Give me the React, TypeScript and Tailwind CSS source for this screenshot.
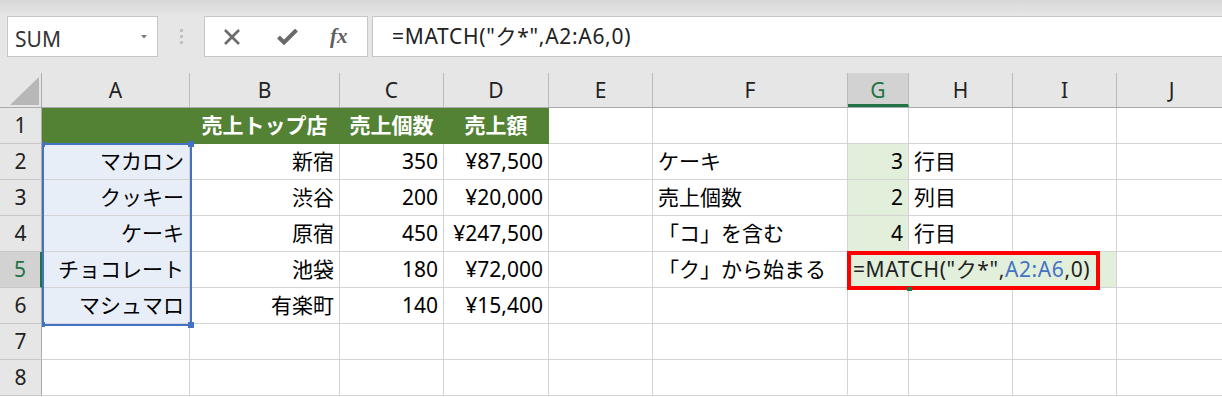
import React from 'react';

const cols = [
  { key: 'A', w: 'w-[148px]' },
  { key: 'B', w: 'w-[150px]' },
  { key: 'C', w: 'w-[104px]' },
  { key: 'D', w: 'w-[105px]' },
  { key: 'E', w: 'w-[104px]' },
  { key: 'F', w: 'w-[195px]' },
  { key: 'G', w: 'w-[61px]' },
  { key: 'H', w: 'w-[104px]' },
  { key: 'I', w: 'w-[104px]' },
  { key: 'J', w: 'w-[110px]' },
];

type Cell = { text?: string; align?: 'l' | 'r' | 'c'; bg?: string; head?: boolean };

const rows: Cell[][] = [
  [
    { head: true },
    { text: '売上トップ店', align: 'c', head: true },
    { text: '売上個数', align: 'c', head: true },
    { text: '売上額', align: 'c', head: true },
    {}, {}, {}, {}, {}, {},
  ],
  [
    { text: 'マカロン', align: 'r', bg: 'sel' },
    { text: '新宿', align: 'r' },
    { text: '350', align: 'r' },
    { text: '¥87,500', align: 'r' },
    {},
    { text: 'ケーキ', align: 'l' },
    { text: '3', align: 'r', bg: 'green' },
    { text: '行目', align: 'l' },
    {}, {},
  ],
  [
    { text: 'クッキー', align: 'r', bg: 'sel' },
    { text: '渋谷', align: 'r' },
    { text: '200', align: 'r' },
    { text: '¥20,000', align: 'r' },
    {},
    { text: '売上個数', align: 'l' },
    { text: '2', align: 'r', bg: 'green' },
    { text: '列目', align: 'l' },
    {}, {},
  ],
  [
    { text: 'ケーキ', align: 'r', bg: 'sel' },
    { text: '原宿', align: 'r' },
    { text: '450', align: 'r' },
    { text: '¥247,500', align: 'r' },
    {},
    { text: '「コ」を含む', align: 'l' },
    { text: '4', align: 'r', bg: 'green' },
    { text: '行目', align: 'l' },
    {}, {},
  ],
  [
    { text: 'チョコレート', align: 'r', bg: 'sel' },
    { text: '池袋', align: 'r' },
    { text: '180', align: 'r' },
    { text: '¥72,000', align: 'r' },
    {},
    { text: '「ク」から始まる', align: 'l' },
  ],
  [
    { text: 'マシュマロ', align: 'r', bg: 'sel' },
    { text: '有楽町', align: 'r' },
    { text: '140', align: 'r' },
    { text: '¥15,400', align: 'r' },
    {}, {}, {}, {}, {}, {},
  ],
  [{}, {}, {}, {}, {}, {}, {}, {}, {}, {}],
  [{}, {}, {}, {}, {}, {}, {}, {}, {}, {}],
];

const font = { fontFamily: '"Noto Sans", "Noto Sans CJK JP", sans-serif' };

const DataCell: React.FC<{ cell: Cell; w: string }> = ({ cell, w }) => {
  const justify = cell.align === 'r' ? 'justify-end' : cell.align === 'c' ? 'justify-center' : 'justify-start';
  let tone = 'bg-white border-[#d4d4d4] text-black';
  if (cell.head) tone = 'bg-[#548235] border-[#548235] text-white font-bold';
  else if (cell.bg === 'sel') tone = 'bg-[#e8eef8] border-[#d4d4d4] text-black';
  else if (cell.bg === 'green') tone = 'bg-[#e2efda] border-[#d4d4d4] text-black';
  return (
    <div className={`${w} h-[36px] shrink-0 flex items-center ${justify} px-[5px] border-r border-b ${tone} text-[21px] leading-none whitespace-nowrap`}>
      {cell.text}
    </div>
  );
};

const FormulaBar: React.FC = () => (
  <div className="h-[73px] bg-[#e6e6e6]">
    <div className="h-[16px] bg-gradient-to-b from-[#d8d8d8] to-[#e6e6e6]" />
    <div className="h-[41px] flex items-stretch">
      <div className="ml-[7px] w-[151px] bg-white border border-[#c6c6c6] flex items-center justify-between pl-[7px] pr-[10px]">
        <span className="text-[21px] text-[#333] leading-none pt-[5px]">SUM</span>
        <svg width="6" height="4" viewBox="0 0 6 4"><path d="M0 0h6L3 3.5z" fill="#7a7a7a" /></svg>
      </div>
      <div className="w-[46px] flex flex-col items-center justify-center gap-[3px]">
        <div className="w-[3px] h-[3px] bg-[#c2c2c2]" />
        <div className="w-[3px] h-[3px] bg-[#c2c2c2]" />
        <div className="w-[3px] h-[3px] bg-[#c2c2c2]" />
      </div>
      <div className="w-[164px] bg-white border border-[#c6c6c6] flex items-center pl-[18px] gap-[36px]">
        <svg width="18" height="16" viewBox="0 0 18 16">
          <path d="M2 1l14 14M16 1L2 15" stroke="#6a6a6a" strokeWidth="2.6" fill="none" />
        </svg>
        <svg width="21" height="16" viewBox="0 0 21 16">
          <path d="M1.5 8l5.5 5.5 12.5-12.5" stroke="#6a6a6a" strokeWidth="4" fill="none" strokeLinejoin="miter" />
        </svg>
        <span className="italic font-bold text-[21px] text-[#5e5e5e] leading-none -ml-[4px]" style={{ fontFamily: '"Liberation Serif", serif' }}>
          fx
        </span>
      </div>
      <div className="ml-[4px] flex-1 bg-white border border-r-0 border-[#c6c6c6] flex items-center pl-[19px]">
        <span className="text-[21px] text-[#222] leading-none whitespace-nowrap tracking-[0.7px]">=MATCH("ク*",A2:A6,0)</span>
      </div>
    </div>
  </div>
);

export default function App() {
  return (
    <div className="w-[1222px] h-[397px] overflow-hidden bg-white relative" style={font}>
      <FormulaBar />
      <div className="relative">
        {/* column headers */}
        <div className="flex h-[35px] bg-[#e6e6e6] border-b border-[#ababab]">
          <div className="w-[42px] shrink-0 border-r border-[#ababab] relative">
            <svg className="absolute left-[10px] top-[4px]" width="30" height="29" viewBox="0 0 30 29">
              <path d="M29 0V28H0z" fill="#b7b7b7" />
            </svg>
          </div>
          {cols.map((c) => (
            <div
              key={c.key}
              className={`${c.w} shrink-0 flex items-center justify-center text-[21px] leading-none ${
                c.key === 'G'
                  ? 'bg-[#d2d2d2] text-[#217346] border-b-[3px] border-b-[#217346] border-r border-r-[#bcbcbc] pt-[3px]'
                  : 'text-[#222] border-r border-[#bcbcbc]'
              }`}
            >
              {c.key}
            </div>
          ))}
        </div>
        {rows.map((row, ri) => (
          <div key={ri} className="flex">
            <div
              className={`w-[42px] h-[36px] shrink-0 flex items-center justify-center text-[21px] leading-none border-b border-[#c8c8c8] ${
                ri === 4
                  ? 'bg-[#d2d2d2] text-[#217346] border-r-2 border-r-[#217346]'
                  : 'bg-[#e6e6e6] text-[#222] border-r border-r-[#ababab]'
              }`}
            >
              {ri + 1}
            </div>
            {ri === 4 ? (
              <>
                {row.map((cell, ci) => (
                  <DataCell key={ci} cell={cell} w={cols[ci].w} />
                ))}
                <div className="w-[269px] h-[36px] shrink-0 relative bg-[#e2efda] border-r border-b border-[#d4d4d4] flex items-center px-[5px] text-[21px] leading-none whitespace-nowrap text-[#222] tracking-[0.6px]">
                  =MATCH("ク*",<span className="text-[#4472c4]">A2:A6</span>,0)
                  <div className="absolute -left-[1px] -top-[1px] w-[253px] h-[39px] border-4 border-[#ff0000]" />
                  <div className="absolute left-[59px] top-[35px] w-[5px] h-[4px] bg-[#217346]" />
                </div>
                <DataCell cell={{}} w={cols[9].w} />
              </>
            ) : (
              row.map((cell, ci) => <DataCell key={ci} cell={cell} w={cols[ci].w} />)
            )}
          </div>
        ))}
        {/* range reference highlight A2:A6 */}
        <div className="absolute left-[42px] top-[70px] w-[150px] h-[183px] border-2 border-[#4472c4] pointer-events-none">
          <div className="absolute -left-[2px] -top-[3px] w-[3px] h-[5px] bg-[#4472c4]" />
          <div className="absolute -right-[4px] -top-[4px] w-[6px] h-[6px] bg-[#4472c4]" />
          <div className="absolute -left-[2px] -bottom-[3px] w-[3px] h-[5px] bg-[#4472c4]" />
          <div className="absolute -right-[4px] -bottom-[4px] w-[6px] h-[6px] bg-[#4472c4]" />
        </div>
      </div>
    </div>
  );
}
